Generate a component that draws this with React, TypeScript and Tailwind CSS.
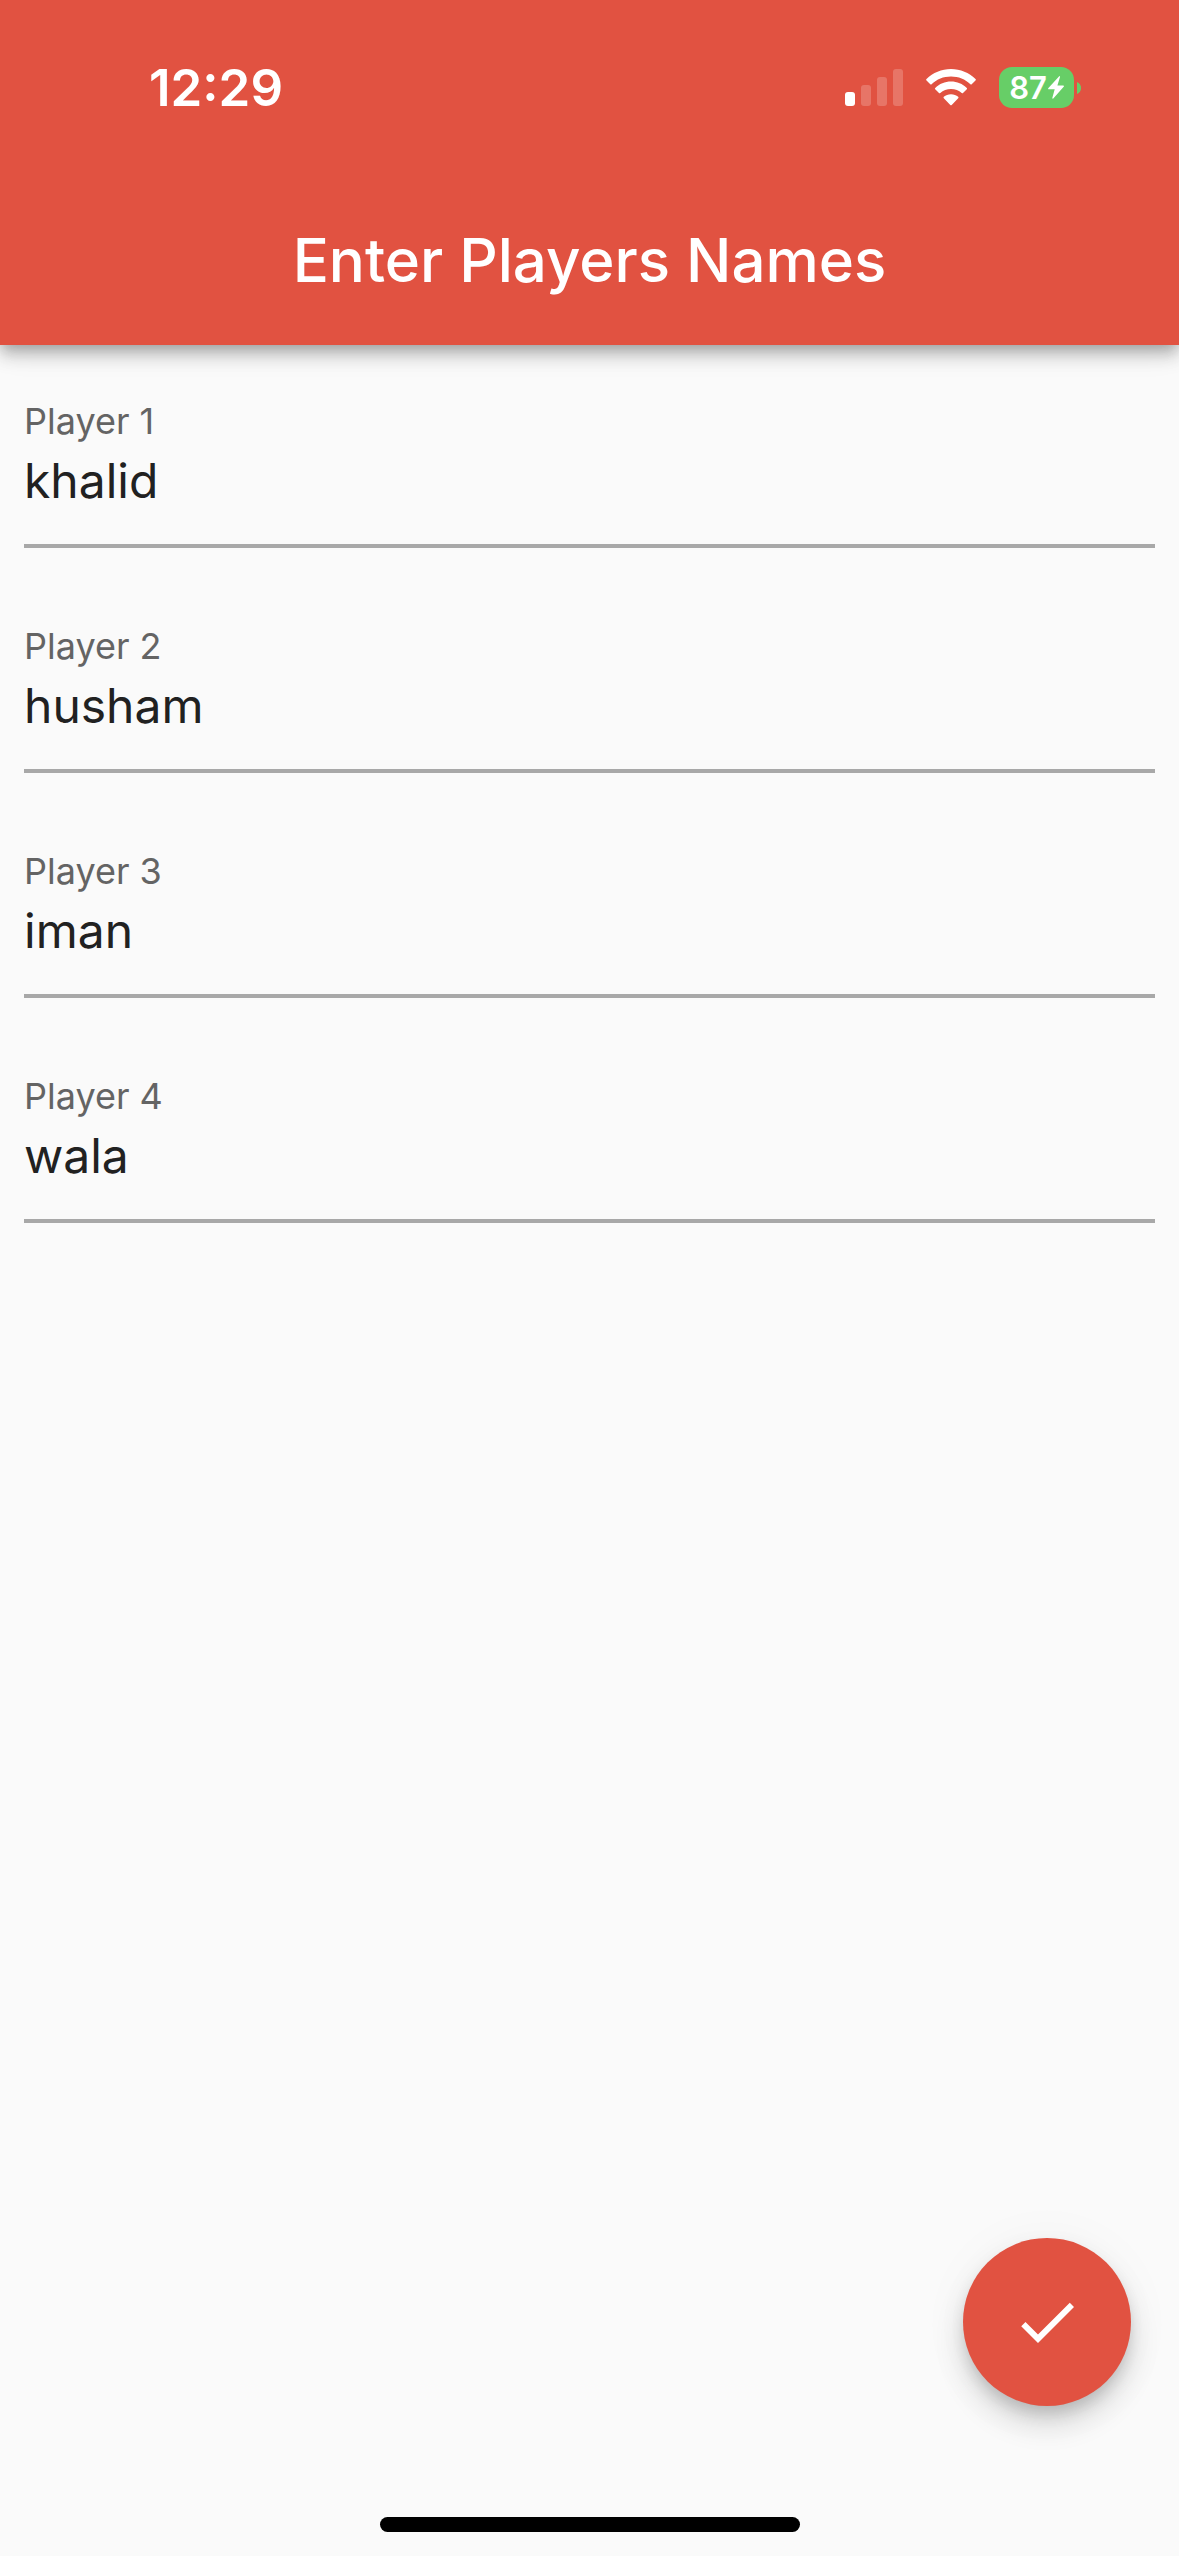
import { useState } from "react";

const initialPlayers = ["khalid", "husham", "iman", "wala"];

function SignalIcon() {
  return (
    <svg width="58" height="37" viewBox="0 0 58 37" fill="#fff" role="img" aria-label="Signal: one bar">
      <rect x="0" y="23" width="10" height="14" rx="3" />
      <g opacity="0.2">
        <rect x="16" y="16" width="10" height="21" rx="3" />
        <rect x="32" y="8" width="10" height="29" rx="3" />
        <rect x="48" y="0" width="10" height="37" rx="3" />
      </g>
    </svg>
  );
}

function WifiIcon() {
  return (
    <svg width="50" height="37" viewBox="0 0 50 37" fill="#fff" role="img" aria-label="Wi-Fi">
      <path d="M25 0C15.600 0 6.900 3.700 .5 10.100Q-.2 10.800 .5 11.500L4.300 15.200Q4.900 15.800 5.600 15.200C10.700 10.200 17.500 7.500 25 7.500S39.300 10.200 44.400 15.200Q45.100 15.800 45.700 15.200L49.500 11.500Q50.200 10.800 49.500 10.100C43.100 3.700 34.400 0 25 0Z" />
      <path d="M25 12.600C18.900 12.600 13.400 14.900 9.200 18.900Q8.500 19.600 9.200 20.300L13 24Q13.600 24.600 14.300 24C17.100 21.500 20.900 20 25 20S32.900 21.500 35.700 24Q36.400 24.600 37 24L40.800 20.300Q41.500 19.600 40.800 18.900C36.600 14.900 31.100 12.600 25 12.600Z" />
      <path d="M25 25.300C22.200 25.300 19.700 26.200 17.800 27.800Q17.100 28.500 17.800 29.200L24.300 35.900Q25 36.600 25.700 35.900L32.200 29.200Q32.900 28.500 32.200 27.800C30.300 26.200 27.800 25.300 25 25.300Z" />
    </svg>
  );
}

function Battery() {
  return (
    <div className="flex items-center gap-[3px]">
      <div className="flex h-[41px] w-[75px] items-center justify-center gap-px rounded-[13px] bg-[#67ce67]">
        <span className="text-[31px] leading-9 font-semibold text-white">87</span>
        <svg width="16" height="23" viewBox="0 0 16 23" fill="#fff" aria-hidden="true">
          <path d="M11.200 .2L.2 12.300Q-.1 13.300 .8 13.300H6.700L4.300 22Q4.500 23 5.300 22.500L15.900 10.500Q16.200 9.500 15.200 9.500H9.400L12 .9Q12 -.2 11.200 .2Z" />
        </svg>
      </div>
      <svg width="4" height="12" viewBox="0 0 4 12" fill="#67ce67" aria-hidden="true">
        <path d="M0 0C2.500 1 4 3.300 4 6S2.500 11 0 12Z" />
      </svg>
    </div>
  );
}

function PlayerField({
  number,
  value,
  onChange,
}: {
  number: number;
  value: string;
  onChange: (value: string) => void;
}) {
  const id = `player-${number}`;
  return (
    <div className="flex flex-col border-b-4 border-[#a8a8a8] pb-[34px]">
      <label htmlFor={id} className="text-[36px] leading-[44px] text-[#646464]">
        Player {number}
      </label>
      <input
        id={id}
        type="text"
        value={value}
        onChange={(event) => onChange(event.target.value)}
        className="mt-[9px] h-[58px] w-full bg-transparent text-[48px] leading-[58px] text-[#212121] outline-none"
      />
    </div>
  );
}

export default function App() {
  const [players, setPlayers] = useState(initialPlayers);

  const rename = (index: number, name: string) =>
    setPlayers((current) => current.map((player, i) => (i === index ? name : player)));

  return (
    <div className="flex min-h-screen flex-col bg-[#fafafa] font-[Inter,sans-serif]">
      <header className="bg-[#e15241] text-white shadow-[0_6px_12px_-3px_rgba(0,0,0,0.2),0_12px_15px_0_rgba(0,0,0,0.14),0_3px_30px_0_rgba(0,0,0,0.12)]">
        <div className="flex h-[175px] items-center justify-between pr-[98px] pl-[149px]">
          <time className="text-[51px] leading-[60px] font-semibold">12:29</time>
          <div className="flex items-center gap-[23px]">
            <SignalIcon />
            <WifiIcon />
            <Battery />
          </div>
        </div>
        <div className="flex h-[170px] items-center justify-center">
          <h1 className="text-[60px] leading-[72px] font-medium">Enter Players Names</h1>
        </div>
      </header>

      <main className="flex grow flex-col">
        <form className="flex flex-col gap-[76px] px-6 pt-[54px]">
          {players.map((player, index) => (
            <PlayerField
              key={index}
              number={index + 1}
              value={player}
              onChange={(name) => rename(index, name)}
            />
          ))}
        </form>
        <div className="mt-auto flex justify-end pr-12">
          <button
            type="button"
            aria-label="Confirm players"
            className="flex size-[168px] items-center justify-center rounded-full bg-[#e15241] shadow-[0_9px_15px_-3px_rgba(0,0,0,0.16),0_18px_30px_0_rgba(0,0,0,0.14),0_3px_54px_0_rgba(0,0,0,0.04)]"
          >
            <svg width="72" height="72" viewBox="0 0 24 24" fill="#fff" aria-hidden="true">
              <path d="M9 16.170L4.830 12l-1.420 1.410L9 19 21 7l-1.410-1.410z" />
            </svg>
          </button>
        </div>
      </main>

      <footer className="flex justify-center pt-[111px] pb-6">
        <div className="h-[15px] w-[420px] rounded-full bg-black" />
      </footer>
    </div>
  );
}
